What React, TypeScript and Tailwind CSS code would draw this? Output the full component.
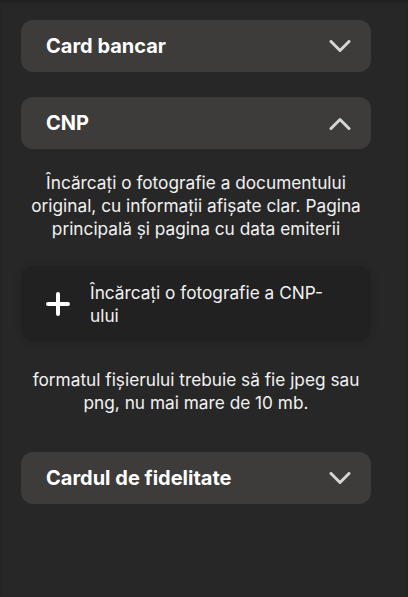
function Chevron({ up }: { up?: boolean }) {
  return (
    <svg width="22" height="13" viewBox="0 0 22 13" fill="none" className="text-[#d6d6d6]">
      <path
        d={up ? "M2 11.5 11 2.5l9 9" : "M2 1.5l9 9 9-9"}
        stroke="currentColor"
        strokeWidth="3"
        strokeLinecap="round"
        strokeLinejoin="round"
      />
    </svg>
  )
}

function SectionHeader({ title, open }: { title: string; open?: boolean }) {
  return (
    <div className="flex h-[52px] items-center justify-between rounded-xl bg-[#3d3c3b] pl-[25px] pr-[20px]">
      <span className="text-[20px] font-bold text-white">{title}</span>
      <Chevron up={open} />
    </div>
  )
}

export default function App() {
  return (
    <div
      className="min-h-screen bg-[#282727] px-[21px] pt-5 text-white shadow-[inset_0_4px_4px_-2px_rgba(0,0,0,0.25)]"
      style={{ fontFamily: "Inter, 'Noto Sans', sans-serif" }}
    >
      <div className="w-[350px]">
        <SectionHeader title="Card bancar" />

        <div className="mt-[25px]">
          <SectionHeader title="CNP" open />

          <p className="mt-[22px] text-center text-[17.25px] leading-[23px] text-[#f2f2f2]">
            Încărcați o fotografie a documentului original, cu informații afișate clar. Pagina principală și pagina cu data emiterii
          </p>

          <button className="mt-[26px] flex h-[75px] w-full items-center gap-5 rounded-xl bg-[#222121] pl-[25px] pr-10 text-left shadow-[0_0_8px_rgba(0,0,0,0.15)]">
            <svg width="24" height="24" viewBox="0 0 24 24" className="shrink-0 text-white">
              <path d="M12 2v20M2 12h20" stroke="currentColor" strokeWidth="4" strokeLinecap="round" />
            </svg>
            <span className="text-[17.25px] leading-[23px] text-[#f2f2f2]">
              Încărcați o fotografie a CNP-ului
            </span>
          </button>

          <p className="mt-[27px] text-center text-[17.25px] leading-[23px] text-[#f2f2f2]">
            formatul fișierului trebuie să fie jpeg sau png, nu mai mare de 10 mb.
          </p>
        </div>

        <div className="mt-[38px]">
          <SectionHeader title="Cardul de fidelitate" />
        </div>
      </div>
    </div>
  )
}
